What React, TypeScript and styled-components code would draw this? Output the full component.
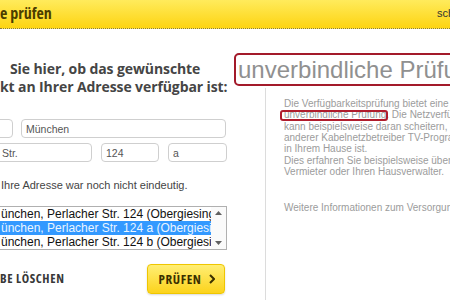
import React from "react";
import styled, { createGlobalStyle } from "styled-components";

const GlobalStyle = createGlobalStyle`
  html, body { margin: 0; padding: 0; background: #fff; overflow: hidden; }
  body { width: 450px; height: 300px; }
  * { box-sizing: border-box; }
`;

const Page = styled.div`
  width: 450px;
  height: 300px;
  overflow: hidden;
  display: flex;
  flex-direction: column;
  background: #fff;
`;

const TopBar = styled.header`
  flex: none;
  height: 29px;
  display: flex;
  align-items: center;
  justify-content: space-between;
  padding-bottom: 2px;
  background: linear-gradient(#ffeb5c, #fdd412);
  border-bottom: 1px dotted #8c7a3a;
`;

const TopTitle = styled.h1`
  margin: 0;
  font-family: "Open Sans", sans-serif;
  font-weight: 700;
  font-size: 16px;
  font-stretch: 85%;
  color: #4b3c00;
`;

const TopLink = styled.span`
  margin-right: -4px;
  font-family: "Liberation Sans", Arial, sans-serif;
  font-size: 11px;
  color: #333;
  white-space: nowrap;
`;

const IntroRow = styled.div`
  flex: none;
  height: 59px;
  display: flex;
  align-items: flex-start;
  padding-top: 24px;
`;

const Lead = styled.h2`
  flex: none;
  width: 234px;
  margin: 7px 0 0;
  font-family: "Open Sans", sans-serif;
  font-weight: 700;
  font-size: 14px;
  letter-spacing: -0.1px;
  line-height: 18px;
  color: #454545;
  white-space: nowrap;
`;

const LeadLine = styled.span<{ $indent?: number }>`
  display: block;
  height: 18px;
  padding-left: ${(p) => p.$indent ?? 0}px;
`;

const Stamp = styled.div`
  flex: none;
  width: 240px;
  height: 33px;
  padding-left: 2px;
  border: 2px solid #a31a2a;
  border-radius: 5px;
  font-family: "Liberation Sans", Arial, sans-serif;
  font-size: 24px;
  line-height: 29px;
  color: #909090;
  white-space: nowrap;
  overflow: hidden;
`;

const Body = styled.div`
  flex: 1;
  min-height: 0;
  display: grid;
  grid-template-columns: 266px 1fr;
`;

const FormColumn = styled.div`
  padding-top: 31px;
  border-right: 1px solid #dcdcdc;
`;

const Form = styled.div`
  width: 237px;
  margin-left: -10px;
  display: flex;
  flex-direction: column;
`;

const FieldRow = styled.div<{ $cols: string; $gap: number; $top?: number }>`
  display: grid;
  grid-template-columns: ${(p) => p.$cols};
  column-gap: ${(p) => p.$gap}px;
  margin-top: ${(p) => p.$top ?? 0}px;
`;

const Field = styled.input<{ $pad?: number }>`
  height: 19px;
  width: 100%;
  margin: 0;
  padding: 0 2px 0 ${(p) => p.$pad ?? 4}px;
  border: 1px solid #cfcfcf;
  border-radius: 4px;
  background: #fff;
  font-family: "Liberation Sans", Arial, sans-serif;
  font-size: 10.5px;
  color: #555;
  outline: none;
`;

const Notice = styled.p`
  margin: 16px 0 0;
  padding-left: 11px;
  font-family: "Liberation Sans", Arial, sans-serif;
  font-size: 11px;
  line-height: 14px;
  color: #444;
  white-space: nowrap;
`;

const ListBox = styled.div`
  margin-top: 14px;
  height: 44px;
  display: grid;
  grid-template-columns: 1fr 15px;
  border: 1px solid #b0b0b0;
  background: #fff;
`;

const Options = styled.div`
  display: flex;
  flex-direction: column;
  overflow: hidden;
`;

const Option = styled.div<{ $selected?: boolean }>`
  height: 14px;
  padding-left: 10px;
  font-family: "Liberation Sans", Arial, sans-serif;
  font-size: 12px;
  line-height: 14px;
  white-space: nowrap;
  overflow: hidden;
  color: ${(p) => (p.$selected ? "#eaf5ff" : "#111")};
  background: ${(p) => (p.$selected ? "#3399ff" : "transparent")};
`;

const ScrollBar = styled.div`
  display: flex;
  flex-direction: column;
  justify-content: space-between;
  align-items: center;
  padding: 4px 0;
  background: #fafafa;
`;

const Actions = styled.div`
  margin-top: 14px;
  width: 235px;
  height: 29px;
  display: flex;
  align-items: center;
  justify-content: space-between;
`;

const ResetLink = styled.span`
  padding-left: 10px;
  font-family: "Open Sans", sans-serif;
  font-weight: 700;
  font-size: 12.5px;
  font-stretch: 85%;
  letter-spacing: 0.6px;
  color: #383838;
`;

const CheckButton = styled.button`
  width: 78px;
  height: 30px;
  display: flex;
  align-items: center;
  justify-content: center;
  gap: 8px;
  padding: 0 0 0 2px;
  border: 1px solid #efc600;
  border-radius: 4px;
  background: linear-gradient(#ffee74, #fcd31c);
  box-shadow: 0 1px 2px rgba(0, 0, 0, 0.15);
  font-family: "Open Sans", sans-serif;
  font-weight: 700;
  font-size: 13px;
  font-stretch: 85%;
  letter-spacing: 0.6px;
  color: #3a3000;
`;

const InfoColumn = styled.div`
  padding: 10px 0 0 18px;
  font-family: "Liberation Sans", Arial, sans-serif;
  font-size: 10px;
  line-height: 11.33px;
  color: #9c9c9c;
  white-space: nowrap;
  overflow: hidden;
`;

const InfoLine = styled.div<{ $top?: number }>`
  margin-top: ${(p) => p.$top ?? 0}px;
`;

const Marked = styled.span`
  position: relative;
  &::after {
    content: "";
    position: absolute;
    left: -4px;
    right: -2px;
    top: 1px;
    bottom: -1px;
    border: 2px solid #b01c2c;
    border-radius: 3px;
  }
`;

const Arrow = ({ up }: { up?: boolean }) => (
  <svg width="7" height="4" viewBox="0 0 7 4">
    <path d={up ? "M0 4 L3.5 0 L7 4 Z" : "M0 0 L3.5 4 L7 0 Z"} fill="#606060" />
  </svg>
);

const Chevron = () => (
  <svg width="6" height="10" viewBox="0 0 6 10">
    <path d="M1 1 L5 5 L1 9" fill="none" stroke="#3a3000" strokeWidth="2" />
  </svg>
);

export default function App() {
  return (
    <Page>
      <GlobalStyle />
      <TopBar>
        <TopTitle>e prüfen</TopTitle>
        <TopLink>sch</TopLink>
      </TopBar>
      <IntroRow>
        <Lead>
          <LeadLine $indent={10}>Sie hier, ob das gewünschte</LeadLine>
          <LeadLine>kt an Ihrer Adresse verfügbar ist:</LeadLine>
        </Lead>
        <Stamp>unverbindliche Prüfung</Stamp>
      </IntroRow>
      <Body>
        <FormColumn>
          <Form>
            <FieldRow $cols="23px 205px" $gap={8}>
              <Field readOnly defaultValue="" />
              <Field readOnly defaultValue="München" />
            </FieldRow>
            <FieldRow $cols="102px 58px 59px" $gap={9} $top={5}>
              <Field readOnly defaultValue="Str." $pad={11} />
              <Field readOnly defaultValue="124" />
              <Field readOnly defaultValue="a" />
            </FieldRow>
            <Notice>Ihre Adresse war noch nicht eindeutig.</Notice>
            <ListBox>
              <Options>
                <Option>ünchen, Perlacher Str. 124 (Obergiesing)</Option>
                <Option $selected>ünchen, Perlacher Str. 124 a (Obergiesing)</Option>
                <Option>ünchen, Perlacher Str. 124 b (Obergiesing)</Option>
              </Options>
              <ScrollBar>
                <Arrow up />
                <Arrow />
              </ScrollBar>
            </ListBox>
            <Actions>
              <ResetLink>BE LÖSCHEN</ResetLink>
              <CheckButton>
                PRÜFEN
                <Chevron />
              </CheckButton>
            </Actions>
          </Form>
        </FormColumn>
        <InfoColumn>
          <InfoLine>Die Verfügbarkeitsprüfung bietet eine</InfoLine>
          <InfoLine>
            <Marked>unverbindliche Prüfung</Marked>. Die Netzverfügbarkeit
          </InfoLine>
          <InfoLine>kann beispielsweise daran scheitern, dass ein</InfoLine>
          <InfoLine>anderer Kabelnetzbetreiber TV-Programme</InfoLine>
          <InfoLine>in Ihrem Hause ist.</InfoLine>
          <InfoLine>Dies erfahren Sie beispielsweise über Ihren</InfoLine>
          <InfoLine>Vermieter oder Ihren Hausverwalter.</InfoLine>
          <InfoLine $top={25}>Weitere Informationen zum Versorgungsgebiet</InfoLine>
        </InfoColumn>
      </Body>
    </Page>
  );
}
